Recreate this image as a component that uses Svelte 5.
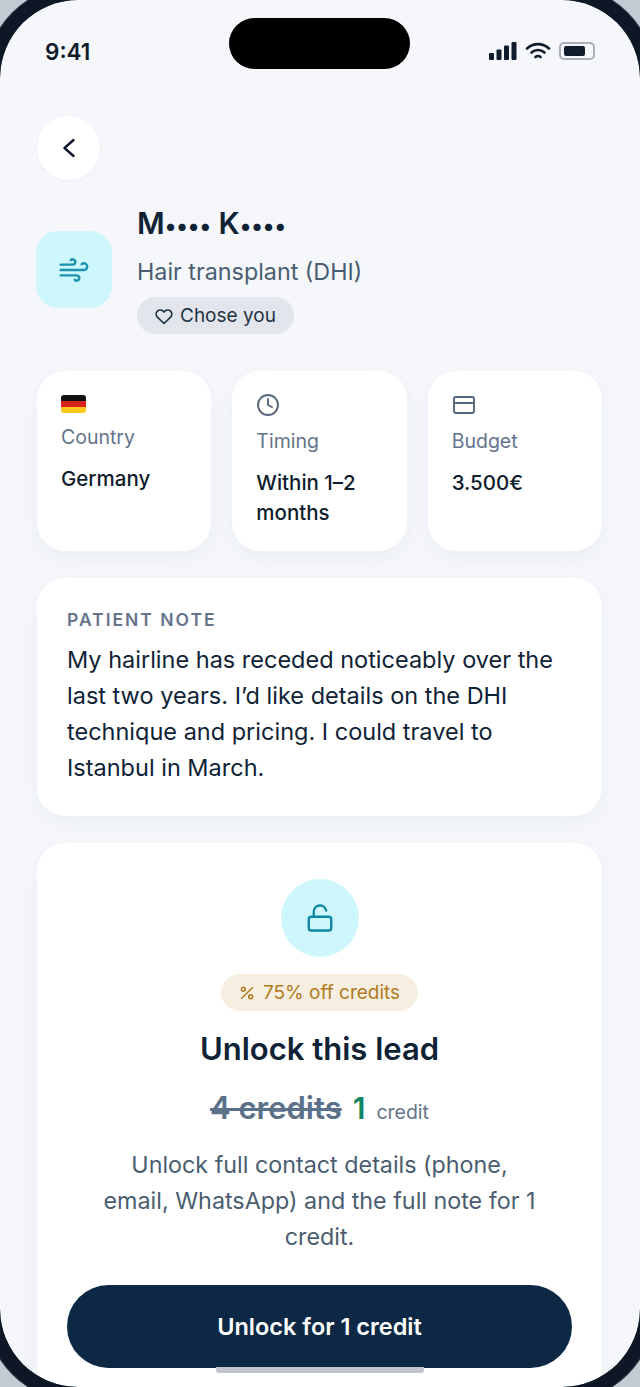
<script>
	const facts = [
		{ key: 'country', label: 'Country', value: 'Germany' },
		{ key: 'timing', label: 'Timing', value: 'Within 1–2 months' },
		{ key: 'budget', label: 'Budget', value: '3.500€' }
	];
</script>

<div class="page">
	<main class="screen">
		<div class="island"></div>

		<div class="status">
			<span class="time">9:41</span>
			<div class="status-icons">
				<svg width="28" height="18" viewBox="0 0 28 18" fill="#101c2c">
					<rect x="0" y="11" width="5" height="7" rx="1" />
					<rect x="7.5" y="7.5" width="5" height="10.5" rx="1" />
					<rect x="15" y="3.5" width="5" height="14.5" rx="1" />
					<rect x="22.5" y="0" width="5" height="18" rx="1" />
				</svg>
				<svg width="26" height="18" viewBox="0 0 26 18" fill="none" stroke="#101c2c" stroke-width="2.6" stroke-linecap="round">
					<path d="M2 6.5a16 16 0 0 1 22 0" />
					<path d="M6.5 10.5a9.5 9.5 0 0 1 13 0" />
					<path d="M10.5 15a3.6 3.6 0 0 1 5 0" />
				</svg>
				<div class="battery"><div class="battery-level"></div></div>
			</div>
		</div>

		<button class="back" aria-label="Back">
			<svg width="24" height="24" viewBox="0 0 24 24" fill="none" stroke="#101c2c" stroke-width="2.4" stroke-linecap="round" stroke-linejoin="round">
				<path d="M16.500 4 7.500 12l9 8" />
			</svg>
		</button>

		<section class="lead">
			<div class="tile">
				<svg width="32" height="32" viewBox="0 0 24 24" fill="none" stroke="#1a93ab" stroke-width="1.8" stroke-linecap="round" stroke-linejoin="round">
					<path d="M17.7 7.7a2.5 2.5 0 1 1 1.8 4.3H2" />
					<path d="M9.6 4.6A2 2 0 1 1 11 8H2" />
					<path d="M12.6 19.4A2 2 0 1 0 14 16H2" />
				</svg>
			</div>
			<div class="lead-text">
				<h1>M<span class="dots">••••</span> K<span class="dots">••••</span></h1>
				<p class="procedure">Hair transplant (DHI)</p>
				<span class="chose">
					<svg width="18" height="18" viewBox="0 0 24 24" fill="none" stroke="#1f3345" stroke-width="2.2" stroke-linecap="round" stroke-linejoin="round">
						<path d="M20.8 5.6a5.5 5.5 0 0 0-7.8 0L12 6.7l-1-1.1a5.5 5.5 0 0 0-7.8 7.8l1 1L12 22l7.800-7.600 1-1a5.500 5.500 0 0 0 0-7.800z" />
					</svg>
					Chose you
				</span>
			</div>
		</section>

		<section class="facts">
			{#each facts as fact (fact.key)}
				<div class="fact" class:flagged={fact.key === 'country'}>
					{#if fact.key === 'country'}
						<div class="flag"></div>
					{:else if fact.key === 'timing'}
						<svg width="24" height="24" viewBox="0 0 24 24" fill="none" stroke="#56687c" stroke-width="1.9" stroke-linecap="round" stroke-linejoin="round">
							<circle cx="12" cy="12" r="10" />
							<path d="M12 6v6l4 2" />
						</svg>
					{:else}
						<svg width="24" height="24" viewBox="0 0 24 24" fill="none" stroke="#56687c" stroke-width="1.9" stroke-linecap="round" stroke-linejoin="round">
							<rect x="2" y="4" width="20" height="16" rx="2" />
							<path d="M2 10h20" />
						</svg>
					{/if}
					<span class="fact-label">{fact.label}</span>
					<span class="fact-value">{fact.value}</span>
				</div>
			{/each}
		</section>

		<section class="note">
			<h2>PATIENT NOTE</h2>
			<p>My hairline has receded noticeably over the last two years. I’d like details on the DHI technique and pricing. I could travel to Istanbul in March.</p>
		</section>

		<section class="unlock">
			<div class="lock">
				<svg width="30" height="30" viewBox="0 0 24 24" fill="none" stroke="#0f86a3" stroke-width="1.9" stroke-linecap="round" stroke-linejoin="round">
					<rect x="3" y="11" width="18" height="11" rx="2" />
					<path d="M7 11V7a5 5 0 0 1 9.900-1" />
				</svg>
			</div>
			<span class="discount">
				<svg width="16" height="16" viewBox="0 0 24 24" fill="none" stroke="#b07a20" stroke-width="2.2" stroke-linecap="round" stroke-linejoin="round">
					<path d="M20 4 4 20" />
					<circle cx="6.500" cy="6.500" r="3" />
					<circle cx="17.500" cy="17.500" r="3" />
				</svg>
				75% off credits
			</span>
			<h2>Unlock this lead</h2>
			<div class="price">
				<s>4 credits</s>
				<strong>1</strong>
				<span>credit</span>
			</div>
			<p>Unlock full contact details (phone, email, WhatsApp) and the full note for 1 credit.</p>
			<button class="cta">Unlock for 1 credit</button>
		</section>

		<div class="home"></div>
	</main>
</div>

<style>
	:global(body) {
		margin: 0;
		background: #c3cad2;
	}

	.page {
		position: relative;
		width: 640px;
		height: 1387px;
		overflow: hidden;
		font-family: Inter, 'Liberation Sans', sans-serif;
		color: #0f2236;
	}

	.page::after {
		content: '';
		position: absolute;
		inset: 0;
		border-radius: 78px;
		box-shadow: 0 0 0 14px #0d1725, 0 0 0 15px #2a3644;
		pointer-events: none;
	}

	.screen {
		position: relative;
		box-sizing: border-box;
		height: 1387px;
		padding: 0 38px 0 37px;
		overflow: hidden;
		background: #f5f7fb;
		border-radius: 78px;
	}

	.island {
		position: absolute;
		top: 18px;
		left: 229px;
		width: 181px;
		height: 51px;
		border-radius: 26px;
		background: #000;
	}

	.status {
		display: flex;
		justify-content: space-between;
		align-items: center;
		height: 18px;
		padding: 42px 7px 0 8px;
	}

	.time {
		font-size: 22.500px;
		font-weight: 600;
		color: #101c2c;
	}

	.status-icons {
		display: flex;
		align-items: center;
		gap: 8px;
	}

	.battery {
		box-sizing: border-box;
		width: 36px;
		height: 18px;
		padding: 2px 3px;
		border: 2px solid #a9afb9;
		border-radius: 5px;
	}

	.battery-level {
		width: 21px;
		height: 10px;
		border-radius: 2px;
		background: #101c2c;
	}

	.back {
		display: flex;
		align-items: center;
		justify-content: center;
		width: 63px;
		height: 64px;
		margin-top: 56px;
		padding: 0;
		border: none;
		border-radius: 50%;
		background: #fff;
		box-shadow: 0 1px 4px rgba(30, 50, 80, 0.04);
	}

	.lead {
		display: flex;
		align-items: flex-start;
		gap: 25px;
		margin-top: 22px;
	}

	.tile {
		display: flex;
		align-items: center;
		justify-content: center;
		flex: none;
		width: 76px;
		height: 77px;
		margin: 29px 0 0 -1px;
		border-radius: 22px;
		background: #cdf7fd;
	}

	.lead-text {
		display: flex;
		flex-direction: column;
		align-items: flex-start;
	}

	.lead-text h1 {
		margin: 0;
		font-size: 30px;
		line-height: 42px;
		font-weight: 600;
		color: #0f2236;
	}

	.dots {
		font-size: 23px;
	}

	.procedure {
		margin: 3px 0 0;
		font-size: 23.300px;
		line-height: 44px;
		color: #4a5d70;
	}

	.chose {
		display: inline-flex;
		align-items: center;
		gap: 7px;
		box-sizing: border-box;
		height: 37px;
		margin-top: 3px;
		padding: 0 18px;
		border-radius: 19px;
		background: #e2e6ec;
		font-size: 19px;
		color: #1f3345;
	}

	.facts {
		display: grid;
		grid-template-columns: repeat(3, 1fr);
		gap: 21px;
		margin-top: 37px;
	}

	.fact {
		display: flex;
		flex-direction: column;
		align-items: flex-start;
		box-sizing: border-box;
		height: 180px;
		padding: 22px 24px;
		border-radius: 28px;
		background: #fff;
		box-shadow: 0 6px 18px rgba(30, 50, 80, 0.05);
	}

	.flag {
		width: 25px;
		height: 18px;
		margin: 2px 0 0;
		border-radius: 3px;
		background: linear-gradient(#111 33%, #d8231f 33% 66%, #fcc81e 66%);
	}

	.fact-label {
		margin-top: 11px;
		font-size: 19.500px;
		line-height: 26px;
		color: #64748b;
	}

	.fact-value {
		margin-top: 14px;
		font-size: 20.500px;
		line-height: 30px;
		font-weight: 500;
		color: #0f1c2c;
	}

	.note {
		box-sizing: border-box;
		height: 238px;
		margin-top: 27px;
		padding: 31px 30px 0;
		border-radius: 28px;
		background: #fff;
		box-shadow: 0 6px 18px rgba(30, 50, 80, 0.05);
	}

	.note h2 {
		margin: 0;
		font-size: 17.500px;
		line-height: 22px;
		font-weight: 600;
		letter-spacing: 2px;
		color: #64748b;
	}

	.note p {
		margin: 11px 0 0;
		font-size: 23.500px;
		line-height: 36px;
		color: #0f2236;
	}

	.unlock {
		display: flex;
		flex-direction: column;
		align-items: center;
		margin-top: 27px;
		padding: 36px 30px 40px;
		border-radius: 28px;
		background: #fff;
		box-shadow: 0 6px 18px rgba(30, 50, 80, 0.05);
	}

	.lock {
		display: flex;
		align-items: center;
		justify-content: center;
		width: 78px;
		height: 78px;
		border-radius: 50%;
		background: #cdf7fd;
	}

	.discount {
		display: inline-flex;
		align-items: center;
		gap: 8px;
		box-sizing: border-box;
		height: 37px;
		margin-top: 17px;
		padding: 0 18px;
		border-radius: 19px;
		background: #f7eee2;
		font-size: 19px;
		color: #b07a20;
	}

	.unlock h2 {
		margin: 18px 0 0;
		font-size: 31px;
		line-height: 40px;
		font-weight: 600;
		color: #0f2236;
	}

	.price {
		display: flex;
		align-items: baseline;
		gap: 11px;
		margin-top: 19px;
	}

	.price s {
		font-size: 31px;
		line-height: 40px;
		font-weight: 600;
		color: #5b7089;
		text-decoration-thickness: 3px;
	}

	.price strong {
		font-size: 30px;
		font-weight: 600;
		color: #12875f;
	}

	.price span {
		font-size: 19.500px;
		color: #64748b;
	}

	.unlock p {
		max-width: 440px;
		margin: 19px 0 0;
		font-size: 23.300px;
		line-height: 36px;
		text-align: center;
		color: #4a5d70;
	}

	.cta {
		flex: none;
		width: 100%;
		height: 83px;
		margin-top: 30px;
		border: none;
		border-radius: 42px;
		background: #0c2844;
		font: inherit;
		font-size: 23.500px;
		font-weight: 600;
		color: #fff;
	}

	.home {
		position: absolute;
		left: 216px;
		top: 1367px;
		width: 208px;
		height: 6px;
		border-radius: 0 0 3px 3px;
		background: #c0c5cd;
	}
</style>
